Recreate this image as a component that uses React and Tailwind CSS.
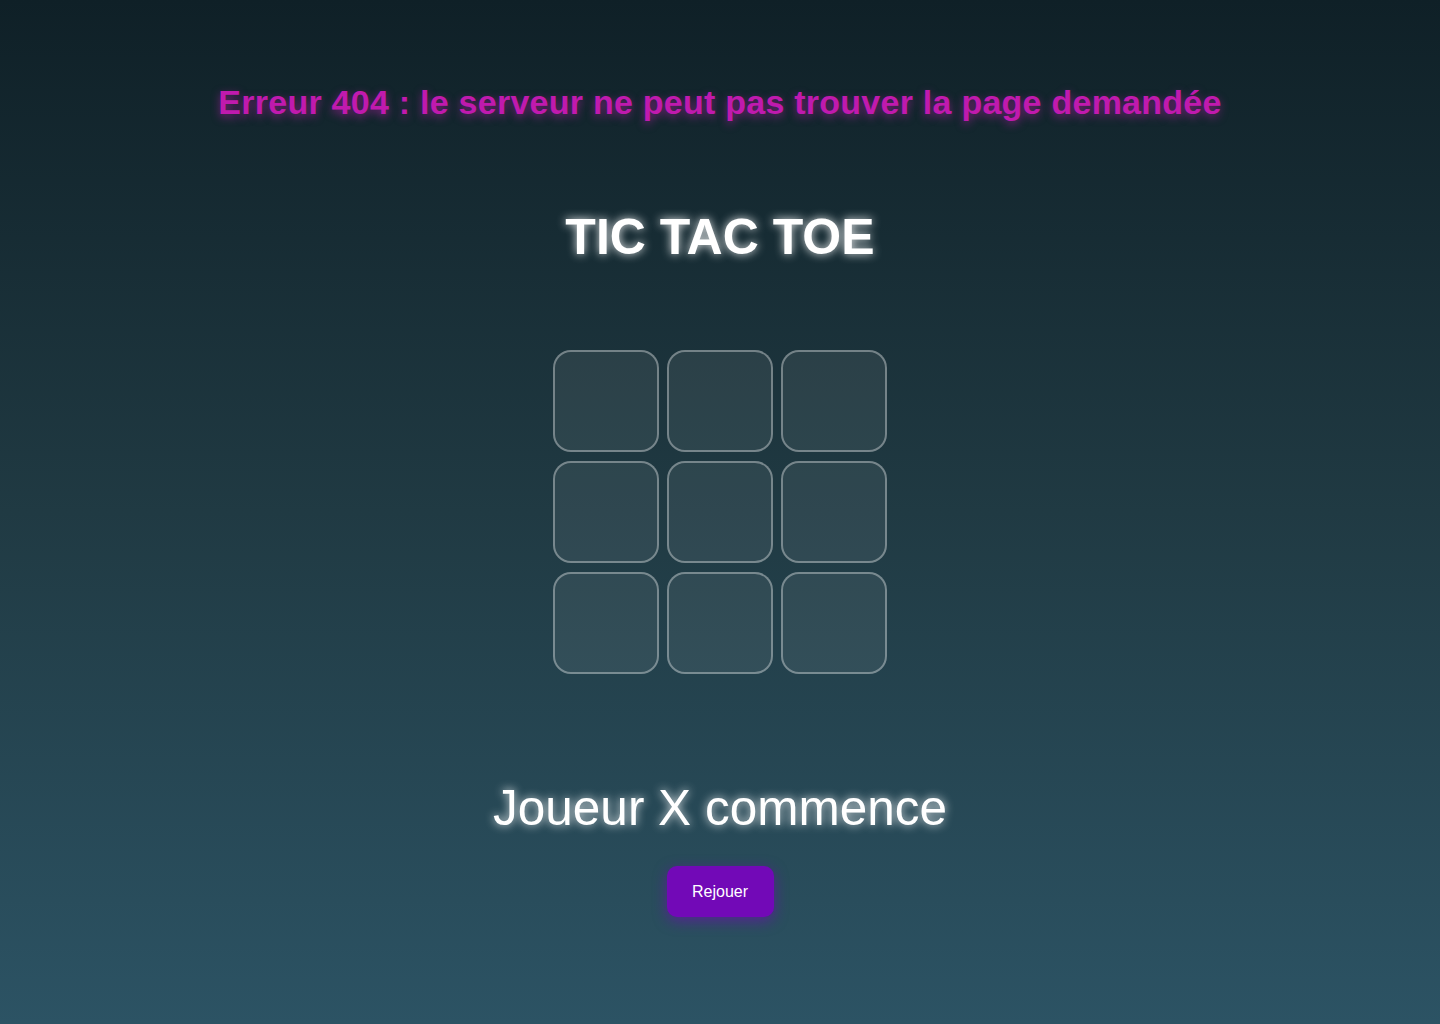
import React, { useState } from "react";

const font = { fontFamily: "'Liberation Sans', Arial, sans-serif" };

function App() {
  const [cells, setCells] = useState(Array(9).fill(""));

  return (
    <div
      className="min-h-screen w-full flex flex-col items-center bg-[linear-gradient(to_bottom,#0f2027,#203a43,#2c5364)] pt-[82px]"
      style={font}
    >
      {/* Error message */}
      <h2 className="text-[34px] leading-[40px] tracking-[0.25px] font-bold text-[#c01aae] [text-shadow:0_3px_8px_rgba(200,30,180,0.55)]">
        Erreur 404 : le serveur ne peut pas trouver la page demandée
      </h2>

      <h1 className="mt-[85px] text-[50px] leading-[60px] font-bold text-white [text-shadow:0_0_10px_rgba(255,255,255,0.9)]">
        TIC TAC TOE
      </h1>

      {/* Board */}
      <div className="mt-[83px] grid grid-cols-3 gap-x-[8px] gap-y-[9px]">
        {cells.map((c, i) => (
          <button
            key={i}
            className="w-[106px] h-[102px] rounded-[18px] border-2 border-[rgba(255,255,255,0.35)] bg-[rgba(255,255,255,0.07)]"
            onClick={() => {
              const next = [...cells];
              next[i] = "X";
              setCells(next);
            }}
          >
            {c}
          </button>
        ))}
      </div>

      <p className="mt-[104px] text-[49.5px] leading-[60px] text-white [text-shadow:0_0_10px_rgba(255,255,255,0.9)]">
        Joueur X commence
      </p>

      <button
        className="mt-[28px] w-[107px] h-[51px] rounded-[10px] bg-[#7209b7] text-white text-[16px] shadow-[0_4px_14px_rgba(114,9,183,0.6)]"
        onClick={() => setCells(Array(9).fill(""))}
      >
        Rejouer
      </button>
    </div>
  );
}

export default App;
